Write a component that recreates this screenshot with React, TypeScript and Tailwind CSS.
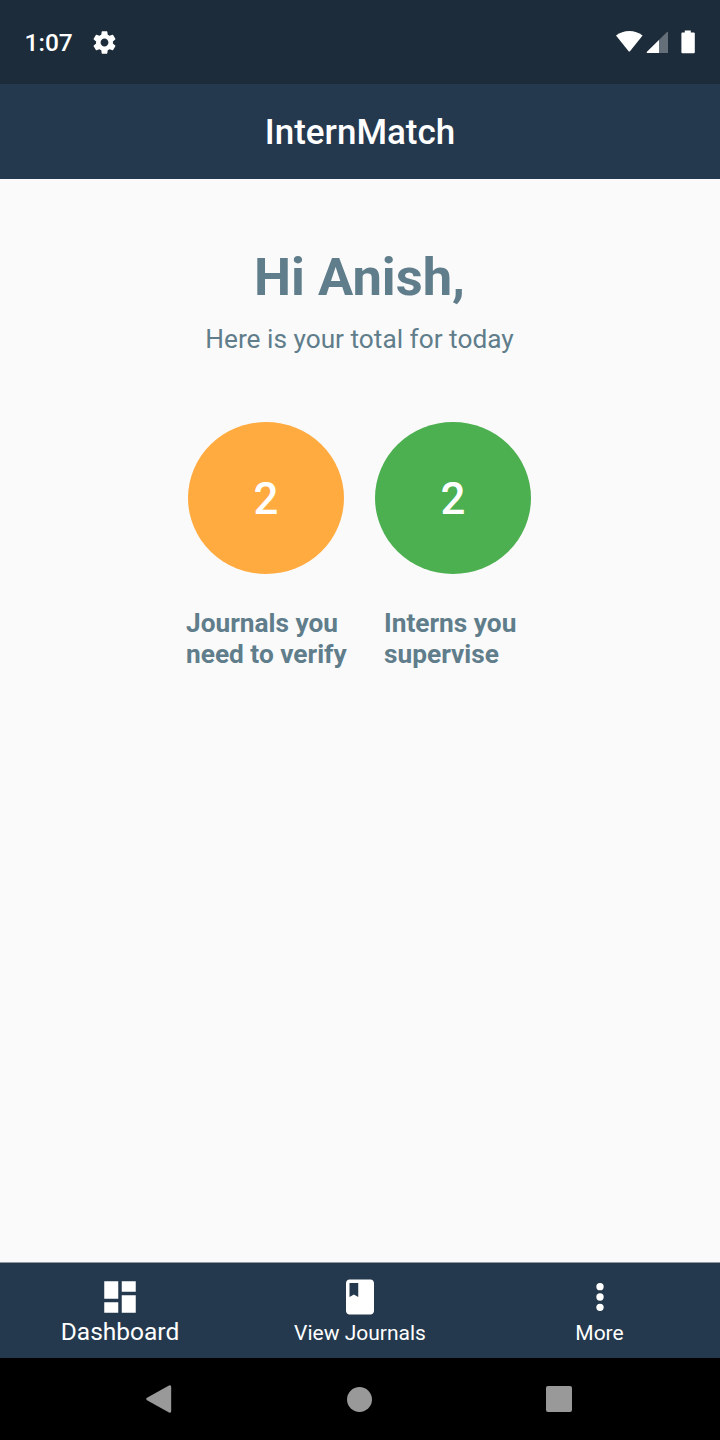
import React from "react";

function StatusBar() {
  return (
    <div className="flex h-[84px] shrink-0 items-center bg-[#1c2c3a] pl-[24.5px] pr-[24px] text-white">
      <span className="w-[66.5px] text-[24.5px] font-medium leading-[28px] pt-[2px]">1:07</span>
      <svg className="h-[27px] w-[27px]" viewBox="0 0 24 24" fill="currentColor">
        <path d="M19.43 12.98c.04-.32.07-.64.07-.98s-.03-.66-.07-.98l2.11-1.65c.19-.15.24-.42.12-.64l-2-3.46c-.12-.22-.39-.3-.61-.22l-2.49 1c-.52-.4-1.08-.73-1.69-.98l-.38-2.65C14.46 2.18 14.25 2 14 2h-4c-.25 0-.46.18-.49.42l-.38 2.65c-.61.25-1.17.59-1.69.98l-2.49-1c-.23-.09-.49 0-.61.22l-2 3.46c-.13.22-.07.49.12.64l2.11 1.65c-.04.32-.07.65-.07.98s.03.66.07.98l-2.11 1.65c-.19.15-.24.42-.12.64l2 3.46c.12.22.39.3.61.22l2.49-1c.52.4 1.08.73 1.69.98l.38 2.65c.03.24.24.42.49.42h4c.25 0 .46-.18.49-.42l.38-2.65c.61-.25 1.17-.59 1.69-.98l2.49 1c.23.09.49 0 .61-.22l2-3.46c.12-.22.07-.49-.12-.64l-2.11-1.65zM12 15.5c-1.93 0-3.5-1.57-3.5-3.5s1.57-3.5 3.5-3.5 3.5 1.57 3.5 3.5-1.57 3.5-3.5 3.5z" />
      </svg>
      <svg className="ml-auto h-[24px] w-[80px]" viewBox="0 0 80 24" fill="currentColor">
        <path d="M0 5.6Q5.8 1 13.3 1T26.6 5.6L14 21.2Q13.3 22 12.6 21.2Z" />
        <path d="M52 1.8V23H31.2Q30.2 22.6 31 21.8L51 2Z" opacity=".32" />
        <path d="M43 10V23H31.2Q30.2 22.6 31 21.8Z" />
        <path d="M68.8 .6h6v2h3q1 0 1 1v18.6q0 1-1 1H66.4q-1 0-1-1V3.6q0-1 1-1h2.4z" />
      </svg>
    </div>
  );
}

function Stat({ value, color }: { value: number; color: string }) {
  return (
    <div className={`flex h-[152px] w-[156px] items-center justify-center rounded-[50%] pt-[4px] text-[43.75px] font-medium text-white ${color}`}>
      {value}
    </div>
  );
}

function BottomTabs() {
  return (
    <nav className="grid h-[96px] shrink-0 grid-cols-3 border-t border-[#91999f] bg-[#24394e] text-white">
      <div className="flex flex-col items-center pt-[13px]">
        <svg className="h-[42px] w-[42px]" viewBox="0 0 24 24" fill="currentColor">
          <path d="M3 13h8V3H3v10zm0 8h8v-6H3v6zm10 0h8V11h-8v10zm0-18v6h8V3h-8z" />
        </svg>
        <span className="text-[24.5px] leading-[28px]">Dashboard</span>
      </div>
      <div className="flex flex-col items-center pt-[13px]">
        <svg className="h-[42px] w-[42px]" viewBox="0 0 24 24" fill="currentColor">
          <path d="M18 2H6c-1.1 0-2 .9-2 2v16c0 1.1.9 2 2 2h12c1.1 0 2-.9 2-2V4c0-1.1-.9-2-2-2zM6 4h5v8l-2.5-1.5L6 12V4z" />
        </svg>
        <span className="mt-[2px] text-[21px] leading-[26px]">View Journals</span>
      </div>
      <div className="flex flex-col items-center pt-[13px]">
        <svg className="h-[42px] w-[42px]" viewBox="0 0 24 24" fill="currentColor">
          <circle cx="12" cy="6.1" r="2.1" />
          <circle cx="12" cy="12" r="2.1" />
          <circle cx="12" cy="17.9" r="2.1" />
        </svg>
        <span className="mt-[2px] pr-px text-[21px] leading-[26px]">More</span>
      </div>
    </nav>
  );
}

function SystemNav() {
  return (
    <div className="flex h-[82px] shrink-0 items-center justify-between bg-black pl-[146px] pr-[148px] text-[#999999]">
      <svg className="h-[28px] w-[26px]" viewBox="0 0 26 28" fill="currentColor">
        <path d="M23 .5Q25.2-.4 25.2 2V26Q25.2 28.4 23 27.4L1 15.2Q-.6 14 1 12.8Z" />
      </svg>
      <div className="h-[25px] w-[25px] rounded-full bg-[#999999]" />
      <div className="h-[26px] w-[26px] rounded-[2px] bg-[#999999]" />
    </div>
  );
}

export default function App() {
  return (
    <div className="flex h-[1440px] w-[720px] flex-col overflow-hidden bg-[#fafafa] font-['Roboto',sans-serif]">
      <StatusBar />
      <header className="flex h-[95px] shrink-0 items-center justify-center bg-[#24394e] pt-[2px] text-[35px] font-medium leading-[40px] text-white">
        InternMatch
      </header>
      <main className="flex grow flex-col items-center pt-[68px] text-[#607d8b]">
        <h1 className="pr-px text-[52.5px] font-bold leading-[60px]">Hi Anish,</h1>
        <p className="mt-[17px] pr-px text-[26.25px] leading-[30px]">Here is your total for today</p>
        <div className="mt-[68px] flex gap-[31px] pr-px">
          <Stat value={2} color="bg-[#ffab40]" />
          <Stat value={2} color="bg-[#4caf50]" />
        </div>
        <div className="mt-[34px] flex w-[348px] text-[26.25px] font-bold leading-[31px]">
          <p className="w-[198px] whitespace-nowrap">Journals you<br />need to verify</p>
          <p className="whitespace-nowrap">Interns you<br />supervise</p>
        </div>
      </main>
      <BottomTabs />
      <SystemNav />
    </div>
  );
}
